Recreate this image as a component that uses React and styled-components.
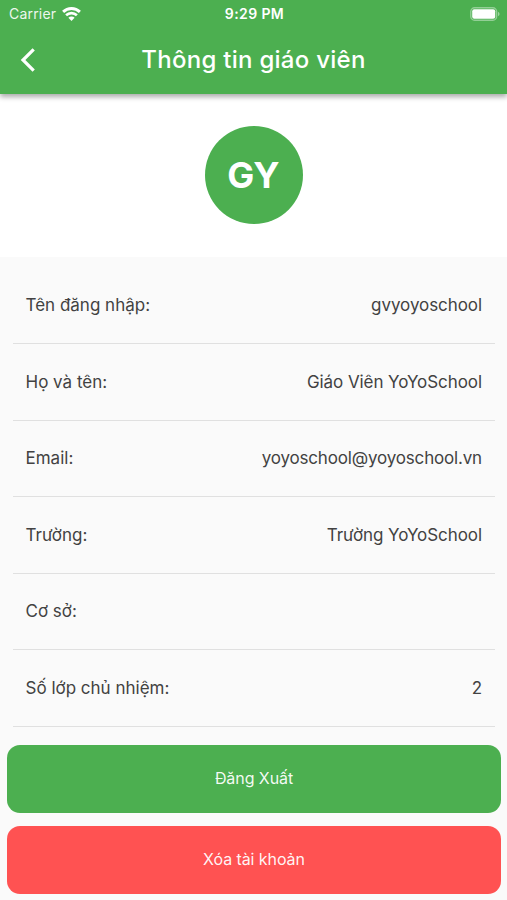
import styled, { createGlobalStyle } from 'styled-components';

const GlobalStyle = createGlobalStyle`
  * {
    box-sizing: border-box;
  }

  body {
    margin: 0;
    background-color: #fafafa;
    font-family: Inter, 'Liberation Sans', sans-serif;
  }
`;

const Screen = styled.div`
  display: flex;
  flex-direction: column;
  height: 900px;
  overflow: hidden;
  background-color: #fafafa;
`;

const Header = styled.header`
  height: 94px;
  flex-shrink: 0;
  background-color: #4caf50;
  box-shadow: 0 3px 5px rgba(0, 0, 0, 0.33);
  z-index: 1;
`;

const StatusBar = styled.div`
  display: grid;
  grid-template-columns: 1fr auto 1fr;
  align-items: center;
  height: 26px;
  padding: 1px 7px 0 9px;
  color: white;
  font-size: 14px;
`;

const Carrier = styled.div`
  display: flex;
  align-items: center;
  gap: 6px;
  letter-spacing: 0.2px;
`;

const CarrierName = styled.span`
  opacity: 0.9;
`;

const Clock = styled.div`
  font-weight: 600;
  letter-spacing: 0.4px;
`;

const BatteryIcon = styled.svg`
  justify-self: end;
`;

const AppBar = styled.div`
  display: grid;
  grid-template-columns: 60px 1fr 60px;
  align-items: center;
  height: 67px;
`;

const BackButton = styled.button`
  display: flex;
  justify-content: flex-start;
  padding: 0 0 0 20px;
  border: none;
  background: none;
  cursor: pointer;
`;

const Title = styled.h1`
  margin: 0;
  text-align: center;
  color: white;
  font-size: 24px;
  font-weight: 500;
  letter-spacing: 0.27px;
`;

const AvatarArea = styled.div`
  display: flex;
  justify-content: center;
  height: 163px;
  padding-top: 31.5px;
  flex-shrink: 0;
  background-color: white;
`;

const Avatar = styled.div`
  display: flex;
  align-items: center;
  justify-content: center;
  width: 98px;
  height: 98px;
  border-radius: 50%;
  background-color: #4caf50;
  color: white;
  font-size: 36px;
  font-weight: 700;
`;

const InfoList = styled.div`
  padding: 10.8px 12.5px 0 13px;
`;

const InfoRow = styled.div`
  display: flex;
  align-items: center;
  justify-content: space-between;
  height: 76.5px;
  padding: 0 12.5px 0.8px;
  border-bottom: 1px solid #e0e0e0;
  color: #424242;
  font-size: 17px;
`;

const Value = styled.span`
  letter-spacing: ${({ $long }) => ($long ? '-0.17px' : '-0.07px')};
`;

const Actions = styled.div`
  display: flex;
  flex-direction: column;
  gap: 12.5px;
  padding: 18px 6px 0 7px;
`;

const ActionButton = styled.button`
  height: 68.5px;
  padding-bottom: 3px;
  border: none;
  border-radius: 13px;
  background-color: ${({ $danger }) => ($danger ? '#ff5252' : '#4caf50')};
  color: rgba(255, 255, 255, 0.94);
  font-family: inherit;
  font-size: 16px;
  letter-spacing: -0.08px;
  cursor: pointer;
`;

const rows = [
  { label: 'Tên đăng nhập:', value: 'gvyoyoschool' },
  { label: 'Họ và tên:', value: 'Giáo Viên YoYoSchool' },
  { label: 'Email:', value: 'yoyoschool@yoyoschool.vn' },
  { label: 'Trường:', value: 'Trường YoYoSchool' },
  { label: 'Cơ sở:', value: '' },
  { label: 'Số lớp chủ nhiệm:', value: '2' },
];

const App = () => {
  return (
    <Screen>
      <GlobalStyle />
      <Header>
        <StatusBar>
          <Carrier>
            <CarrierName>Carrier</CarrierName>
            <svg width="19" height="14" viewBox="0 0 19 14" fill="none" stroke="white">
              <path d="M1.1 4.9a12 12 0 0 1 16.8 0" strokeWidth="2.9" />
              <path d="M4.1 8.3a7.7 7.7 0 0 1 10.8 0" strokeWidth="2.6" />
              <path d="M9.5 13.9 6.4 10.8a4.4 4.4 0 0 1 6.2 0z" fill="white" stroke="none" />
            </svg>
          </Carrier>
          <Clock>9:29 PM</Clock>
          <BatteryIcon width="30" height="14" viewBox="0 0 30 14">
            <rect x="0.8" y="0.8" width="25.8" height="12.4" rx="3.8" fill="none" stroke="white" strokeOpacity="0.4" strokeWidth="1.4" />
            <rect x="2.2" y="2.3" width="23" height="9.4" rx="2" fill="white" />
            <path d="M28 4.8v4.4q1.6-.7 1.6-2.2T28 4.8z" fill="white" fillOpacity="0.45" />
          </BatteryIcon>
        </StatusBar>
        <AppBar>
          <BackButton aria-label="Quay lại">
            <svg width="16" height="26" viewBox="0 0 16 26" fill="none" stroke="white" strokeWidth="3.2">
              <path d="M13.7 2.3 3 13l10.7 10.7" />
            </svg>
          </BackButton>
          <Title>Thông tin giáo viên</Title>
        </AppBar>
      </Header>
      <AvatarArea>
        <Avatar>GY</Avatar>
      </AvatarArea>
      <InfoList>
        {rows.map((row) => (
          <InfoRow key={row.label}>
            <span>{row.label}</span>
            <Value $long={row.value.length > 20}>{row.value}</Value>
          </InfoRow>
        ))}
      </InfoList>
      <Actions>
        <ActionButton>Đăng Xuất</ActionButton>
        <ActionButton $danger>Xóa tài khoản</ActionButton>
      </Actions>
    </Screen>
  );
};

export default App;
